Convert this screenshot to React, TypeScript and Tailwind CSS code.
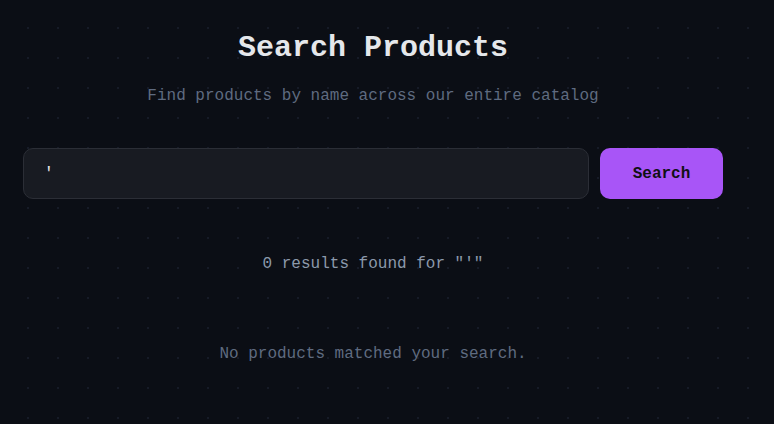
import React, { useState } from "react";

const mono = "font-['Liberation_Mono','Courier_New',monospace]";

export default function App() {
  const [query, setQuery] = useState("'");

  return (
    <div
      className={`min-h-[424px] w-full bg-[#0b0e15] bg-[radial-gradient(circle,#161b27_1px,transparent_1.5px)] bg-[size:30px_30px] bg-[position:13px_13px] ${mono}`}
    >
      <div className="w-[700px] ml-[23px] flex flex-col items-center pt-[30px]">
        <h1 className="text-[30px] leading-[36px] font-bold text-[#e5e7eb]">
          Search Products
        </h1>
        <p className="mt-[18px] text-[16px] leading-[24px] text-[#5f6b80]">
          Find products by name across our entire catalog
        </p>

        <form
          className="mt-[40px] w-full flex gap-[11px]"
          onSubmit={(e) => e.preventDefault()}
        >
          <input
            value={query}
            onChange={(e) => setQuery(e.target.value)}
            className={`flex-1 h-[51px] rounded-[10px] bg-[#181b22] border border-[#2b2e36] px-[20px] text-[16px] text-[#e5e7eb] outline-none ${mono}`}
          />
          <button
            type="submit"
            className={`w-[123px] h-[51px] rounded-[10px] bg-[#a855f7] text-[16px] font-bold text-[#111015] ${mono}`}
          >
            Search
          </button>
        </form>

        <p className="mt-[53px] text-[16px] leading-[24px] text-[#8c99ab]">
          0 results found for "{query}"
        </p>

        <p className="mt-[66px] text-[16px] leading-[24px] text-[#5f6b80]">
          No products matched your search.
        </p>
      </div>
    </div>
  );
}
